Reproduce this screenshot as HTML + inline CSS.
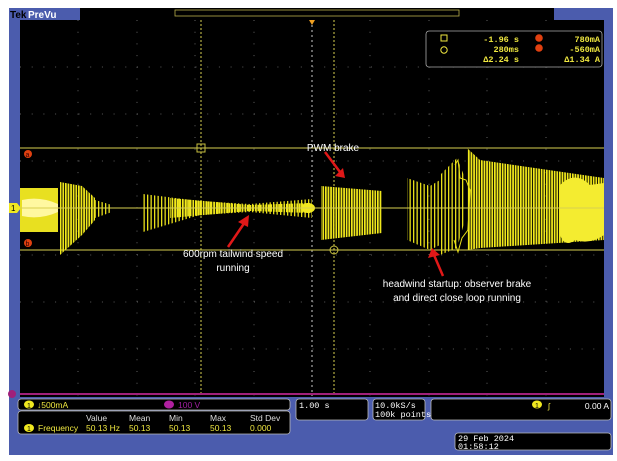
<!DOCTYPE html>
<html><head><style>
body{margin:0;width:617px;height:461px;background:#fff;overflow:hidden;font-family:"Liberation Sans",sans-serif}
svg{position:absolute;left:0;top:0}
</style></head><body>
<svg width="617" height="461" viewBox="0 0 617 461" xmlns="http://www.w3.org/2000/svg">
<defs>
<pattern id="h" width="2.6" height="10" patternUnits="userSpaceOnUse"><rect width="1.7" height="10" fill="#f2ea1c"/></pattern>
<pattern id="h2" width="3.5" height="10" patternUnits="userSpaceOnUse"><rect width="1.3" height="10" fill="#e8df1a"/></pattern>
</defs>
<rect x="9" y="8" width="604" height="447" fill="#4b5cad"/>
<rect x="80" y="8" width="474" height="12" fill="#000"/>
<rect x="175" y="10" width="284" height="6" fill="none" stroke="#b8b04a" stroke-width="0.8"/>
<text x="10" y="18" font-size="10" fill="#000" font-weight="bold">Tek</text>
<text x="28" y="18" font-size="10" fill="#fff" font-weight="bold">PreVu</text>
<rect x="20" y="20" width="584" height="377" fill="#000"/>
<g stroke="#777" stroke-width="0.8" stroke-dasharray="1 10.7">
<line x1="78" y1="20" x2="78" y2="396"/><line x1="137" y1="20" x2="137" y2="396"/><line x1="195" y1="20" x2="195" y2="396"/><line x1="254" y1="20" x2="254" y2="396"/><line x1="370" y1="20" x2="370" y2="396"/><line x1="429" y1="20" x2="429" y2="396"/><line x1="487" y1="20" x2="487" y2="396"/><line x1="546" y1="20" x2="546" y2="396"/>
<line x1="20" y1="67" x2="604" y2="67"/><line x1="20" y1="114" x2="604" y2="114"/><line x1="20" y1="161" x2="604" y2="161"/><line x1="20" y1="255" x2="604" y2="255"/><line x1="20" y1="302" x2="604" y2="302"/><line x1="20" y1="349" x2="604" y2="349"/>
</g>
<line x1="312" y1="20" x2="312" y2="396" stroke="#ccc" stroke-width="1" stroke-dasharray="2 3"/>
<line x1="201" y1="20" x2="201" y2="396" stroke="#d8d050" stroke-width="1" stroke-dasharray="2 2"/>
<line x1="334" y1="20" x2="334" y2="396" stroke="#d8d050" stroke-width="1" stroke-dasharray="2 2"/>
<path d="M309 20 L315 20 L312 25Z" fill="#f0a020"/>
<line x1="20" y1="148" x2="604" y2="148" stroke="#d8d050"/>
<line x1="20" y1="250" x2="604" y2="250" stroke="#d8d050"/>
<rect x="197" y="144" width="8" height="8" fill="none" stroke="#c8c040"/>
<circle cx="334" cy="250" r="4" fill="none" stroke="#c8c040"/>
<line x1="20" y1="394" x2="604" y2="394" stroke="#a0207a" stroke-width="2"/>
<circle cx="12" cy="394" r="4" fill="#a0207a"/>
<circle cx="28" cy="154" r="4" fill="#e04010"/><text x="25.5" y="157" font-size="7" fill="#300">a</text>
<circle cx="28" cy="243" r="4" fill="#e04010"/><text x="25.5" y="246" font-size="7" fill="#300">b</text>
<path d="M9 203 L17 203 L21 208 L17 213 L9 213Z" fill="#f0e820"/><text x="11" y="211" font-size="8" fill="#000">1</text>
<g fill="url(#h)">
<rect x="20" y="188" width="38" height="44" fill="#e8e020"/>
<path d="M22 200 Q40 196 58 204 L58 212 Q40 220 22 216Z" fill="#fff8a0"/>
<path d="M60 182 L82 186 L95 198 L95 220 L82 235 L60 255Z"/>
<path d="M95 200 L112 205 L112 212 L95 218Z" fill="url(#h2)"/>
<path d="M143 194 L200 201 L250 204 L312 199 L312 218 L250 212 L200 215 L143 232Z" fill="url(#h2)"/>
<path d="M170 198 L250 205 L310 203 L310 213 L250 211 L170 218Z"/>
<ellipse cx="308" cy="208" rx="7" ry="5" fill="#f0e820"/>
<path d="M321 186 L382 191 L382 233 L321 240Z"/>
<path d="M407 178 L430 186 L440 180 L440 245 L430 250 L407 240Z" fill="url(#h2)"/>
<path d="M440 175 L457 158 L465 178 L465 220 L457 248 L440 255Z" fill="url(#h2)"/>
<path d="M467 148 L480 160 L604 178 L604 240 L480 248 L467 250Z"/>
<path d="M560 185 Q575 170 590 185 L604 183 L604 235 Q590 245 575 240 Q565 248 560 235Z" fill="#f4ec30"/>
</g>
<path d="M455 165 L458 160 L460 178 L466 180 L470 190 L468 230 L462 238 L458 252 L454 240" fill="none" stroke="#e8df1a" stroke-width="1"/>
<line x1="20" y1="208" x2="604" y2="208" stroke="#d8d050" stroke-width="1"/>
<g stroke="#e01818" stroke-width="2.5" fill="#e01818">
<line x1="325" y1="152" x2="340" y2="172"/><path d="M335 176 L345 178 L343 168Z" stroke="none"/>
<line x1="228" y1="247" x2="245" y2="222"/><path d="M238 222 L249 215 L248 227Z" stroke="none"/>
<line x1="443" y1="276" x2="434" y2="255"/><path d="M428 258 L432 248 L440 255Z" stroke="none"/>
</g>
<g fill="#fff" font-size="10" text-anchor="middle">
<text x="333" y="151">PWM brake</text>
<text x="233" y="257">600rpm tailwind speed</text>
<text x="233" y="271">running</text>
<text x="457" y="287">headwind startup: observer brake</text>
<text x="457" y="301">and direct close loop running</text>
</g>
<rect x="426" y="31" width="176" height="36" rx="3" fill="#000" stroke="#aaa" stroke-width="0.8"/>
<g font-size="8.5" fill="#f0e840" font-family="'Liberation Mono',monospace" font-weight="bold">
<rect x="441" y="35" width="6" height="6" fill="none" stroke="#f0e840"/>
<circle cx="444" cy="50" r="3.2" fill="none" stroke="#f0e840"/>
<text x="519" y="42" text-anchor="end">-1.96 s</text>
<text x="519" y="52" text-anchor="end">280ms</text>
<text x="519" y="62" text-anchor="end">Δ2.24 s</text>
<text x="600" y="42" text-anchor="end">780mA</text>
<text x="600" y="52" text-anchor="end">-560mA</text>
<text x="600" y="62" text-anchor="end">Δ1.34 A</text>
</g>
<circle cx="539" cy="38" r="3.8" fill="#e04010"/><circle cx="539" cy="48" r="3.8" fill="#e04010"/>
<g fill="#000" stroke="#bbb" stroke-width="0.8">
<rect x="18" y="399" width="272" height="11" rx="3"/>
<rect x="18" y="411" width="272" height="23" rx="3"/>
<rect x="296" y="399" width="72" height="21" rx="3"/>
<rect x="373" y="399" width="52" height="21" rx="3"/>
<rect x="431" y="399" width="180" height="21" rx="3"/>
<rect x="455" y="433" width="156" height="17" rx="3"/>
</g>
<ellipse cx="29" cy="404.5" rx="5" ry="4" fill="#f0e820"/><text x="27" y="408" font-size="7" fill="#000">1</text>
<ellipse cx="169" cy="404.5" rx="5" ry="4" fill="#b020a0"/>
<ellipse cx="29" cy="428" rx="5" ry="4" fill="#f0e820"/><text x="27" y="431" font-size="7" fill="#000">1</text>
<ellipse cx="537" cy="404.5" rx="5" ry="4" fill="#f0e820"/><text x="535" y="408" font-size="7" fill="#000">1</text>
<g font-size="8.5" fill="#f0e840">
<text x="37" y="408">↓500mA</text>
<text x="38" y="431">Frequency</text>
<text x="86" y="431">50.13 Hz</text><text x="129" y="431">50.13</text><text x="169" y="431">50.13</text><text x="210" y="431">50.13</text><text x="250" y="431">0.000</text>
<text x="548" y="409">ʃ</text><text x="609" y="409" text-anchor="end" fill="#fff">0.00 A</text>
</g>
<g font-size="8.5" fill="#ddd">
<text x="86" y="421">Value</text><text x="129" y="421">Mean</text><text x="169" y="421">Min</text><text x="210" y="421">Max</text><text x="250" y="421">Std Dev</text>
</g>
<text x="178" y="408" font-size="8.5" fill="#a020a0">100 V</text>
<g font-size="8.5" fill="#fff" font-family="'Liberation Mono',monospace">
<text x="299" y="408">1.00 s</text>
<text x="375" y="408">10.0kS/s</text><text x="375" y="417">100k points</text>
<text x="458" y="441">29 Feb 2024</text><text x="458" y="449">01:58:12</text>
</g>
</svg>
</body></html>
